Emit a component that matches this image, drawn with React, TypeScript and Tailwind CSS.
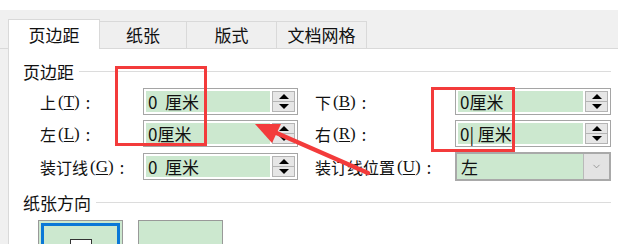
import { ChevronDown } from 'lucide-react';

const FONT = { fontFamily: '"Noto Sans CJK SC", "Liberation Sans", sans-serif' };

function Label({ text, hot, width }: { text: string; hot: string; width: string }) {
  return (
    <div className={`${width} flex-shrink-0 flex items-center text-[16px] text-[#111] leading-none`}>
      <span>{text}</span>
      <span className="font-['Liberation_Serif'] text-[17px] ml-[2px]">
        (<span className="underline underline-offset-2">{hot}</span>)
      </span>
      <span className="ml-[6px]">:</span>
    </div>
  );
}

function Spin({ value, width }: { value: string; width: string }) {
  return (
    <div className={`${width} h-[27px] flex-shrink-0 border border-[#a5a5a5] bg-white flex p-[2px] gap-[2px]`}>
      <div className="flex-1 bg-[#cce8cf] flex items-center pl-[2px] text-[17px] text-[#111] leading-none whitespace-pre">
        {value}
      </div>
      <div className="w-[23px] flex flex-col">
        <div className="flex-1 border border-[#b4b4b4] bg-[#e6e6e6] flex items-center justify-center">
          <div className="w-0 h-0 border-l-[5px] border-r-[5px] border-b-[5px] border-l-transparent border-r-transparent border-b-black" />
        </div>
        <div className="flex-1 border border-[#b4b4b4] border-t-0 bg-[#e6e6e6] flex items-center justify-center">
          <div className="w-0 h-0 border-l-[5px] border-r-[5px] border-t-[5px] border-l-transparent border-r-transparent border-t-black" />
        </div>
      </div>
    </div>
  );
}

function Heading({ text }: { text: string }) {
  return (
    <div className="flex items-center h-[20px] pr-[7px]">
      <span className="text-[17px] text-[#111] leading-none">{text}</span>
      <div className="flex-1 h-px bg-[#dcdcdc] ml-[5px]" />
    </div>
  );
}

export default function App() {
  const tabs = [
    { name: '纸张', w: 'w-[87px]' },
    { name: '版式', w: 'w-[90px]' },
    { name: '文档网格', w: 'w-[90px]' },
  ];

  return (
    <div className="relative w-[618px] h-[244px] overflow-hidden bg-[#f0f0f0]" style={FONT}>
      {/* top strip */}
      <div className="h-[10px] bg-white" />

      {/* Tabs */}
      <div className="h-[39px] flex items-end pl-[8px] border-b border-[#d9d9d9]">
        <div className="w-[92px] h-[30px] -mb-px bg-white border border-b-0 border-[#d9d9d9] flex items-center justify-center text-[17px] text-[#111] relative z-10">
          页边距
        </div>
        {tabs.map((t) => (
          <div
            key={t.name}
            className={`${t.w} h-[27px] border border-l-0 border-b-0 border-[#d9d9d9] bg-[#efefef] flex items-center justify-center text-[17px] text-[#111]`}
          >
            {t.name}
          </div>
        ))}
      </div>

      {/* Panel */}
      <div className="ml-[8px] h-[196px] bg-white border-l border-[#d9d9d9] pl-[14px] pt-[12px]">
        <Heading text="页边距" />

        <div className="flex flex-col gap-[5px] mt-[7px] pl-[17px]">
          <div className="flex items-center">
            <Label text="上" hot="T" width="w-[103px]" />
            <Spin value="0  厘米" width="w-[155px]" />
            <div className="w-[17px]" />
            <Label text="下" hot="B" width="w-[140px]" />
            <Spin value="0厘米" width="w-[156px]" />
          </div>
          <div className="flex items-center">
            <Label text="左" hot="L" width="w-[103px]" />
            <Spin value="0厘米" width="w-[155px]" />
            <div className="w-[17px]" />
            <Label text="右" hot="R" width="w-[140px]" />
            <Spin value="0| 厘米" width="w-[156px]" />
          </div>
          <div className="flex items-center">
            <Label text="装订线" hot="G" width="w-[103px]" />
            <Spin value="0  厘米" width="w-[155px]" />
            <div className="w-[17px]" />
            <Label text="装订线位置" hot="U" width="w-[140px]" />
            <div className="w-[156px] h-[29px] border-2 border-[#a9a9a9] bg-[#cce8cf] flex">
              <div className="flex-1 flex items-center pl-[4px] text-[17px] text-[#111] leading-none">左</div>
              <div className="w-[26px] bg-[#e3e3e3] border-l border-[#b9b9b9] flex items-center justify-center">
                <ChevronDown size={11} strokeWidth={1.25} className="text-[#666]" />
              </div>
            </div>
          </div>
        </div>

        <div className="mt-[11px]">
          <Heading text="纸张方向" />
        </div>

        <div className="flex gap-[15px] mt-[8px] pl-[15px]">
          <div className="w-[85px] h-[40px] border border-[#999] bg-[#cce8cf] p-[2px]">
            <div className="w-full h-full border-[3px] border-[#0a78d7] flex justify-center pt-[13px]">
              <div className="w-[22px] h-[20px] border border-[#333] bg-white" />
            </div>
          </div>
          <div className="w-[85px] h-[40px] border border-[#999] bg-[#cce8cf]" />
        </div>
      </div>

      {/* Annotations */}
      <div className="absolute left-[115px] top-[66px] w-[92px] h-[80px] border-[3px] border-[#f33b3b]" />
      <div className="absolute left-[431px] top-[87px] w-[84px] h-[65px] border-[3px] border-[#f33b3b]" />
      <svg className="absolute left-0 top-0 pointer-events-none" width="618" height="244">
        <line x1="368" y1="173" x2="272" y2="131" stroke="#f33b3b" strokeWidth="4.5" strokeLinecap="round" />
        <polygon points="255,124 281,124 272,143" fill="#f33b3b" />
      </svg>
    </div>
  );
}
